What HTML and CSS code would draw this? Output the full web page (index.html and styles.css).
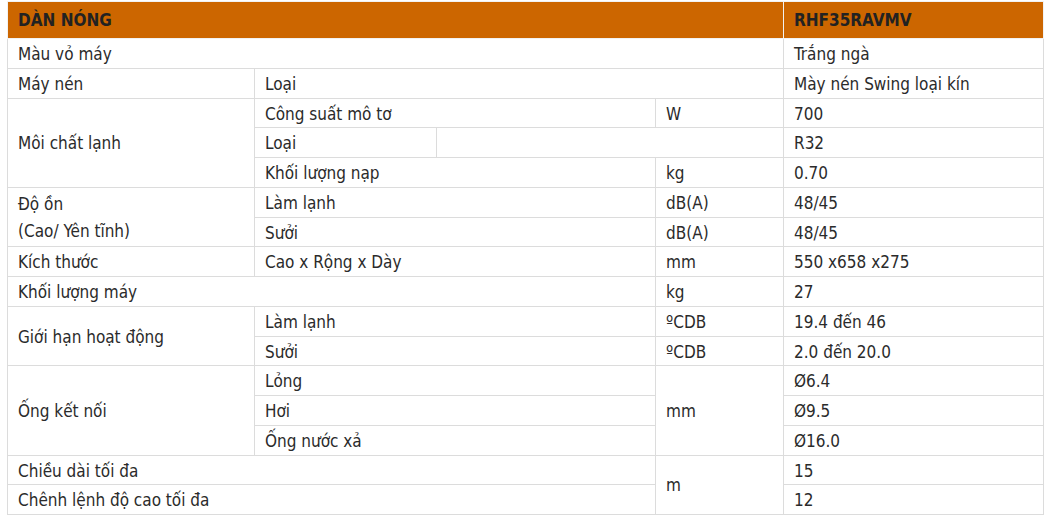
FILE: index.html
```html
<!DOCTYPE html>
<html lang="vi">
<head>
<meta charset="utf-8">
<title>Dàn nóng</title>
<link rel="stylesheet" href="styles.css">
</head>
<body>
<table class="spec">
  <colgroup>
    <col class="c1"><col class="c2"><col class="c3"><col class="c4"><col class="c5">
  </colgroup>
  <thead>
    <tr class="head">
      <th colspan="4">DÀN NÓNG</th>
      <th>RHF35RAVMV</th>
    </tr>
  </thead>
  <tbody>
    <tr><td colspan="4">Màu vỏ máy</td><td>Trắng ngà</td></tr>
    <tr><td>Máy nén</td><td colspan="3">Loại</td><td>Mày nén Swing loại kín</td></tr>
    <tr><td rowspan="3">Môi chất lạnh</td><td colspan="2">Công suất mô tơ</td><td>W</td><td>700</td></tr>
    <tr><td>Loại</td><td colspan="2"></td><td>R32</td></tr>
    <tr><td colspan="2">Khối lượng nạp</td><td>kg</td><td>0.70</td></tr>
    <tr><td rowspan="2">Độ ồn<br>(Cao/ Yên tĩnh)</td><td colspan="2">Làm lạnh</td><td>dB(A)</td><td>48/45</td></tr>
    <tr><td colspan="2">Sưởi</td><td>dB(A)</td><td>48/45</td></tr>
    <tr><td>Kích thước</td><td colspan="2">Cao x Rộng x Dày</td><td>mm</td><td>550 x658 x275</td></tr>
    <tr><td colspan="3">Khối lượng máy</td><td>kg</td><td>27</td></tr>
    <tr><td rowspan="2">Giới hạn hoạt động</td><td colspan="2">Làm lạnh</td><td>ºCDB</td><td>19.4 đến 46</td></tr>
    <tr><td colspan="2">Sưởi</td><td>ºCDB</td><td>2.0 đến 20.0</td></tr>
    <tr><td rowspan="3">Ống kết nối</td><td colspan="2">Lỏng</td><td rowspan="3">mm</td><td>Ø6.4</td></tr>
    <tr><td colspan="2">Hơi</td><td>Ø9.5</td></tr>
    <tr><td colspan="2">Ống nước xả</td><td>Ø16.0</td></tr>
    <tr><td colspan="3">Chiều dài tối đa</td><td rowspan="2">m</td><td>15</td></tr>
    <tr><td colspan="3">Chênh lệnh độ cao tối đa</td><td>12</td></tr>
  </tbody>
</table>
</body>
</html>
```

FILE: styles.css
```css
html, body {
  margin: 0;
  padding: 0;
  background: #fff;
}
body {
  padding: 1px 0 0 7px;
  font-family: "DejaVu Sans Condensed", "DejaVu Sans", sans-serif;
  font-stretch: condensed;
  font-size: 17px;
  color: #2b2b2b;
}
.spec {
  border-collapse: collapse;
  table-layout: fixed;
  width: 1036px;
}
.c1 { width: 247px; }
.c2 { width: 182px; }
.c3 { width: 219px; }
.c4 { width: 128px; }
.c5 { width: 260px; }
.spec td, .spec th {
  border: 1px solid #dcdcdc;
  padding: 2px 10px 0;
  line-height: 26.75px;
  text-align: left;
  vertical-align: middle;
  font-weight: normal;
}
.head th {
  background: #cc6600;
  color: #222;
  font-weight: bold;
  height: 35px;
  padding: 1px 10px 0;
  border-color: #f2f2f2;
}
```
